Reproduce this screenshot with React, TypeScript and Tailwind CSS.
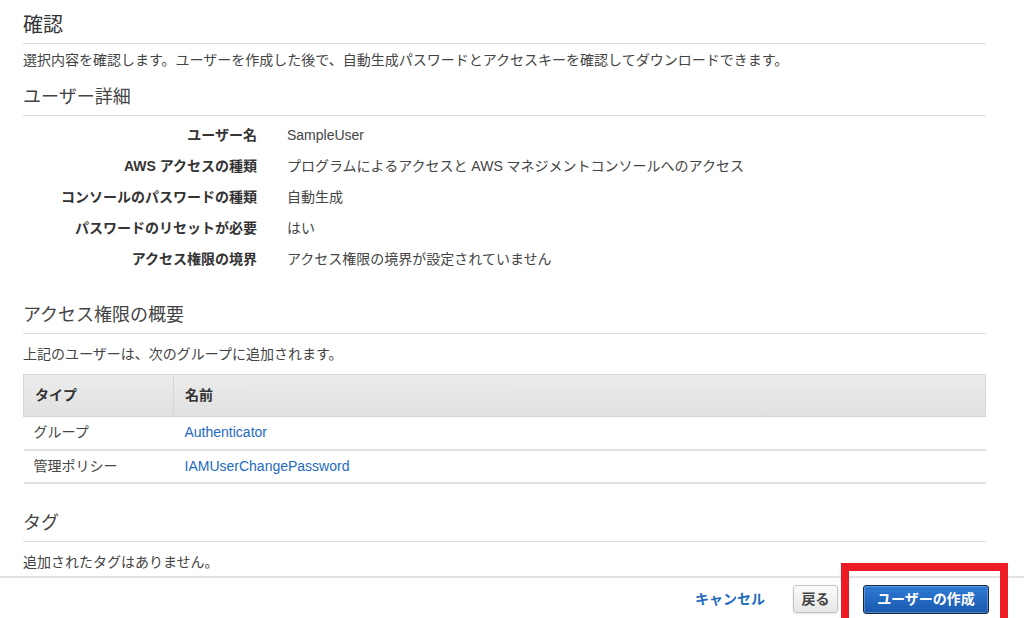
const font = { fontFamily: '"Liberation Sans", Arial, "Noto Sans CJK JP", sans-serif' };

const details = [
  ["ユーザー名", "SampleUser"],
  ["AWS アクセスの種類", "プログラムによるアクセスと AWS マネジメントコンソールへのアクセス"],
  ["コンソールのパスワードの種類", "自動生成"],
  ["パスワードのリセットが必要", "はい"],
  ["アクセス権限の境界", "アクセス権限の境界が設定されていません"],
];

const perms = [
  ["グループ", "Authenticator"],
  ["管理ポリシー", "IAMUserChangePassword"],
];

function SectionTitle({ children, className = "" }: { children: React.ReactNode; className?: string }) {
  return (
    <h3 className={`border-b border-[#dddddd] pb-[5px] text-[18px] font-normal leading-[26px] text-[#444] ${className}`}>
      {children}
    </h3>
  );
}

export default function App() {
  return (
    <div className="relative h-[618px] w-[1024px] overflow-hidden bg-white text-[14px] text-[#444]" style={font}>
      <div className="pl-[23px] pr-[38px]">
        {/* Page header */}
        <h2 className="border-b border-[#dddddd] pt-[11px] pb-[4px] text-[20px] font-normal leading-[28px] text-[#333]">
          確認
        </h2>
        <p className="mt-[6px] leading-[20px]">
          選択内容を確認します。ユーザーを作成した後で、自動生成パスワードとアクセスキーを確認してダウンロードできます。
        </p>

        {/* User details */}
        <SectionTitle className="mt-[14px]">ユーザー詳細</SectionTitle>
        <dl className="mt-[4px]">
          {details.map(([k, v]) => (
            <div key={k} className="flex h-[31px] items-center">
              <dt className="w-[234px] text-right font-bold text-[#333]">{k}</dt>
              <dd className="pl-[30px]">{v}</dd>
            </div>
          ))}
        </dl>

        {/* Permissions summary */}
        <SectionTitle className="mt-[27px] pb-[4px]">アクセス権限の概要</SectionTitle>
        <p className="mt-[10px] leading-[20px]">上記のユーザーは、次のグループに追加されます。</p>
        <table className="mt-[10px] w-full border-collapse">
          <thead>
            <tr className="h-[42px] bg-gradient-to-b from-[#ececec] to-[#e0e0e0] text-left">
              <th className="w-[150px] border border-[#d6d6d6] pl-[11px] font-bold text-[#333]">タイプ</th>
              <th className="border border-[#d6d6d6] pl-[11px] font-bold text-[#333]">名前</th>
            </tr>
          </thead>
          <tbody>
            {perms.map(([t, n]) => (
              <tr key={n} className="h-[33px] border-b-2 border-[#e2e2e2]">
                <td className="pl-[10px]">{t}</td>
                <td className="pl-[11px] text-[#1e6bc0]">{n}</td>
              </tr>
            ))}
          </tbody>
        </table>

        {/* Tags */}
        <SectionTitle className="mt-[26px]">タグ</SectionTitle>
        <p className="mt-[10px] leading-[20px]">追加されたタグはありません。</p>
      </div>

      {/* Footer */}
      <div className="mt-[4px] flex items-center justify-end border-t-2 border-[#e2e2e2] pt-[7px] pr-[35px]">
        <button className="mr-[28px] font-bold text-[#1f6cbf]">キャンセル</button>
        <button className="h-[28px] w-[45px] rounded-[3px] border border-[#c4c4c4] bg-gradient-to-b from-[#fbfbfb] to-[#e6e6e6] font-bold text-[#444] shadow-sm">
          戻る
        </button>
        <button className="ml-[25px] h-[29px] w-[126px] rounded-[3px] border border-[#14263d] bg-gradient-to-b from-[#2f7ad6] to-[#1859ae] font-bold text-white shadow-[inset_0_0_0_1px_rgba(255,255,255,0.25)]">
          ユーザーの作成
        </button>
      </div>

      {/* Red annotation box */}
      <div className="pointer-events-none absolute left-[841px] top-[563px] h-[64px] w-[167px] border-[8px] border-[#ed1c24]" />
    </div>
  );
}
